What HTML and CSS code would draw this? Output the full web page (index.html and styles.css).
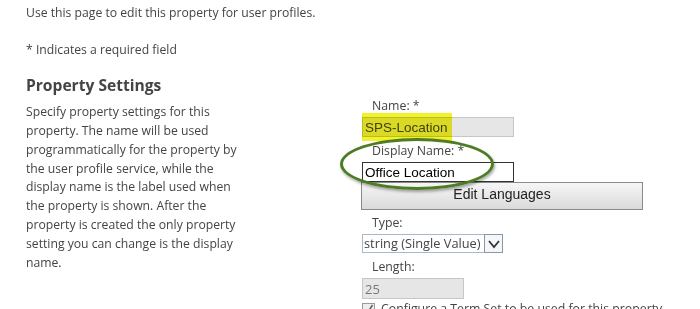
FILE: index.html
```html
<!DOCTYPE html>
<html>
<head>
    <title>Edit User Profile Property</title>
    <link rel="stylesheet" href="styles.css">
</head>
<body>
    <div class="page">
        <p class="intro">Use this page to edit this property for user profiles.</p>
        <p class="required">* Indicates a required field</p>

        <div class="section">
            <div class="section-info">
                <h3>Property Settings</h3>
                <p class="section-desc">Specify property settings for this<br>property. The name will be used<br>programmatically for the property by<br>the user profile service, while the<br>display name is the label used when<br>the property is shown. After the<br>property is created the only property<br>setting you can change is the display<br>name.</p>
            </div>

            <div class="section-fields">
                <div class="field-label">Name: *</div>
                <div class="field-wrap">
                    <input class="text-input disabled" value="SPS-Location" readonly>
                    <span class="highlight"></span>
                </div>

                <div class="field-label">Display Name: *</div>
                <div class="field-wrap">
                    <input class="text-input active" value="Office Location">
                    <span class="circle"></span>
                </div>
                <button class="lang-btn">Edit Languages</button>

                <div class="field-label">Type:</div>
                <div class="select-box">
                    <span class="select-value">string (Single Value)</span>
                    <span class="select-arrow">
                        <svg width="14" height="10" viewBox="0 0 14 10"><path d="M2 2 L7 8 L12 2" fill="none" stroke="#333" stroke-width="1.8"/></svg>
                    </span>
                </div>

                <div class="field-label">Length:</div>
                <input class="text-input short disabled" value="25" readonly>

                <label class="check-row">
                    <span class="check-box">
                        <svg width="11" height="11" viewBox="0 0 11 11"><path d="M2 6 L4.5 9 L9.5 1" fill="none" stroke="#666" stroke-width="1.6"/></svg>
                    </span>
                    Configure a Term Set to be used for this property
                </label>
            </div>
        </div>
    </div>
</body>
</html>
```

FILE: styles.css
```css
body {
    margin: 0;
    padding: 0;
    background-color: #fff;
    font-family: "Open Sans", "Noto Sans", sans-serif;
    color: #444;
    overflow: hidden;
}

.page {
    padding: 3px 0 0 26px;
}

.intro {
    margin: 0;
    font-size: 12.2px;
    line-height: 20px;
}

.required {
    margin: 17px 0 0 0;
    font-size: 12.2px;
    line-height: 20px;
}

.section {
    display: flex;
    margin-top: 15px;
}

.section-info {
    width: 336px;
}

.section-info h3 {
    margin: 0;
    font-size: 15.6px;
    font-weight: bold;
    line-height: 20px;
    color: #444;
}

.section-desc {
    margin: 8px 0 0 0;
    font-size: 12.2px;
    line-height: 18.85px;
}

.section-fields {
    display: flex;
    flex-direction: column;
    align-items: flex-start;
    padding-top: 22px;
}

.field-label {
    padding-left: 10px;
    font-size: 12.3px;
    line-height: 18px;
    height: 18px;
    margin-bottom: 2px;
}

.field-wrap {
    position: relative;
}

.text-input {
    display: block;
    box-sizing: border-box;
    width: 152px;
    height: 20px;
    margin: 0 0 5px 0;
    padding: 0 2px;
    border: 1px solid #333;
    background-color: #fff;
    font-family: "Liberation Sans", Arial, sans-serif;
    font-size: 13.5px;
    color: #000;
    outline: none;
}

.text-input.active {
    margin-bottom: 0;
}

.text-input.disabled {
    border: 1px solid #c6c6c6;
    background-color: #e6e6e6;
    color: #444;
}

.text-input.short {
    width: 102px;
    height: 21px;
    margin-bottom: 2px;
    font-family: "Open Sans", sans-serif;
    font-size: 13px;
    color: #777;
}

.highlight {
    position: absolute;
    left: 0;
    top: -4px;
    width: 90px;
    height: 28px;
    background-color: #f2f22a;
    mix-blend-mode: multiply;
    pointer-events: none;
}

.circle {
    position: absolute;
    left: -22px;
    top: -24px;
    width: 148px;
    height: 46px;
    border: 3px solid #4d7c23;
    border-radius: 50%;
    box-shadow: 1px 2px 3px rgba(0, 0, 0, 0.35);
    pointer-events: none;
}

.lang-btn {
    width: 282px;
    height: 28px;
    margin: 0 0 4px -1px;
    border: 1px solid #8a8a8a;
    background: linear-gradient(#f6f6f6, #dadada);
    font-family: "Liberation Sans", Arial, sans-serif;
    font-size: 14px;
    color: #222;
    padding: 0 0 4px 0;
}

.select-box {
    display: flex;
    height: 19px;
    margin-bottom: 5px;
}

.select-value {
    box-sizing: border-box;
    width: 122px;
    height: 19px;
    border: 1px solid #a9b8c8;
    border-right: none;
    font-size: 12.8px;
    line-height: 17px;
    padding-left: 1px;
    color: #444;
}

.select-arrow {
    box-sizing: border-box;
    width: 19px;
    height: 19px;
    border: 1px solid #8898a8;
    display: flex;
    align-items: center;
    justify-content: center;
    background-color: #f4f6f8;
}

.check-row {
    display: flex;
    align-items: center;
    gap: 6px;
    font-size: 12.3px;
    line-height: 16px;
    color: #444;
}

.check-box {
    box-sizing: border-box;
    width: 13px;
    height: 13px;
    border: 1px solid #999;
    background-color: #eee;
    display: flex;
    align-items: center;
    justify-content: center;
}
```
